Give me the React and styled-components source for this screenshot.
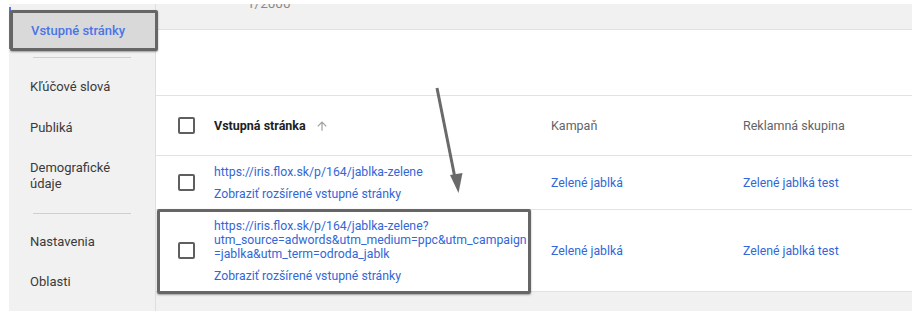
import React from "react";
import styled, { createGlobalStyle } from "styled-components";

const Global = createGlobalStyle`
  html, body { margin: 0; padding: 0; background: #fff; }
  body { font-family: Roboto, "Noto Sans", Arial, sans-serif; -webkit-font-smoothing: antialiased; }
`;

const Page = styled.div`
  display: flex;
  width: 903px;
  height: 307px;
  margin: 4px 0 0 9px;
  background: #f1f1f1;
`;

const Sidebar = styled.nav`
  width: 147px;
  flex: none;
  display: flex;
  flex-direction: column;
  padding-top: 3px;
  border-right: 1px solid #dedede;
  box-sizing: border-box;
  position: relative;
  z-index: 2;
`;

const SelectedItem = styled.div`
  position: relative;
  height: 42px;
  border-left: 2px solid #4a7bea;
  box-sizing: border-box;
`;

const Highlight = styled.div`
  position: absolute;
  top: 3px;
  left: -1px;
  right: -3px;
  bottom: -2px;
  display: flex;
  align-items: center;
  padding-left: 18px;
  background: #d9d9d9;
  border: 3px solid #666;
  border-radius: 2px;
  box-shadow: 0 1px 2px rgba(0, 0, 0, 0.35);
  font-size: 13px;
  font-weight: 500;
  color: #4a75e6;
`;

const Divider = styled.div`
  height: 1px;
  background: #cfcfcf;
  margin: ${(p) => p.$top}px 24px 0 24px;
  width: 98px;
`;

const NavItem = styled.div`
  display: flex;
  align-items: center;
  height: ${(p) => p.$h || 41}px;
  margin-top: ${(p) => p.$mt || 0}px;
  padding-left: 21px;
  font-size: 13px;
  line-height: 16px;
  color: #3a3a3a;
`;

const Main = styled.main`
  flex: 1;
  display: flex;
  flex-direction: column;
  position: relative;
`;

const TopStrip = styled.div`
  height: 25px;
  overflow: hidden;
  border-bottom: 1px solid #e2e2e2;
  padding-left: 91px;
  font-size: 13.5px;
  color: #8a8a8a;
  line-height: 16px;
  & > span { display: block; margin-top: -9px; }
`;

const Blank = styled.div`
  height: 65px;
  background: #fff;
  border-bottom: 1px solid #e2e2e2;
`;

const Row = styled.div`
  position: relative;
  display: grid;
  grid-template-columns: 36px 337px 192px 1fr;
  align-items: center;
  height: ${(p) => p.$h}px;
  padding-left: 22px;
  background: #fff;
  border-bottom: 1px solid #e2e2e2;
`;

const Checkbox = styled.span`
  display: block;
  width: 13px;
  height: 13px;
  border: 2px solid #5f5f5f;
  border-radius: 2px;
`;

const HeadCell = styled.div`
  font-size: 12.5px;
  color: ${(p) => (p.$strong ? "#202124" : "#5f6368")};
  font-weight: ${(p) => (p.$strong ? 700 : 400)};
  display: flex;
  align-items: center;
  gap: 9px;
`;

const UrlCell = styled.div`
  display: flex;
  flex-direction: column;
  gap: ${(p) => p.$gap}px;
`;

const Link = styled.span`
  font-size: 12.25px;
  line-height: 14px;
  color: #3367d6;
  white-space: pre-line;
`;

const Footer = styled.div`
  flex: 1;
`;

const Annotation = styled.div`
  position: absolute;
  left: 1px;
  top: -1px;
  width: 374px;
  height: 85px;
  box-sizing: border-box;
  border: 3px solid #666;
  border-radius: 2px;
  box-shadow: 0 1px 2px rgba(0, 0, 0, 0.35);
  pointer-events: none;
`;

const ArrowSvg = styled.svg`
  position: absolute;
  left: 272px;
  top: 75px;
  overflow: visible;
  pointer-events: none;
`;

const ArrowUp = () => (
  <svg width="14" height="14" viewBox="0 0 24 24">
    <path d="M4 12l1.41 1.41L11 7.83V20h2V7.83l5.58 5.59L20 12l-8-8-8 8z" fill="#9e9e9e" />
  </svg>
);

export default function App() {
  return (
    <>
      <Global />
      <Page>
        <Sidebar>
          <SelectedItem>
            <Highlight>Vstupné stránky</Highlight>
          </SelectedItem>
          <Divider $top={8} />
          <NavItem $mt={8}>Kľúčové slová</NavItem>
          <NavItem>Publiká</NavItem>
          <NavItem $h={55}>Demografické<br />údaje</NavItem>
          <Divider $top={10} />
          <NavItem $mt={8} $h={40}>Nastavenia</NavItem>
          <NavItem $h={40}>Oblasti</NavItem>
        </Sidebar>
        <Main>
          <TopStrip><span>1/2000</span></TopStrip>
          <Blank />
          <Row $h={59}>
            <Checkbox />
            <HeadCell $strong>Vstupná stránka <ArrowUp /></HeadCell>
            <HeadCell>Kampaň</HeadCell>
            <HeadCell>Reklamná skupina</HeadCell>
          </Row>
          <Row $h={53}>
            <Checkbox />
            <UrlCell $gap={8}>
              <Link>https://iris.flox.sk/p/164/jablka-zelene</Link>
              <Link>Zobraziť rozšírené vstupné stránky</Link>
            </UrlCell>
            <Link>Zelené jablká</Link>
            <Link>Zelené jablká test</Link>
          </Row>
          <Row $h={81}>
            <Annotation />
            <Checkbox />
            <UrlCell $gap={8}>
              <Link>{"https://iris.flox.sk/p/164/jablka-zelene?\nutm_source=adwords&utm_medium=ppc&utm_campaign\n=jablka&utm_term=odroda_jablk"}</Link>
              <Link>Zobraziť rozšírené vstupné stránky</Link>
            </UrlCell>
            <Link>Zelené jablká</Link>
            <Link>Zelené jablká test</Link>
          </Row>
          <Footer />
          <ArrowSvg width="40" height="120">
            <line x1="9" y1="9" x2="28" y2="104" stroke="#6a6a6a" strokeWidth="3" />
            <path d="M22 96 L30.5 114 L34.5 94 Z" fill="#6a6a6a" />
          </ArrowSvg>
        </Main>
      </Page>
    </>
  );
}
